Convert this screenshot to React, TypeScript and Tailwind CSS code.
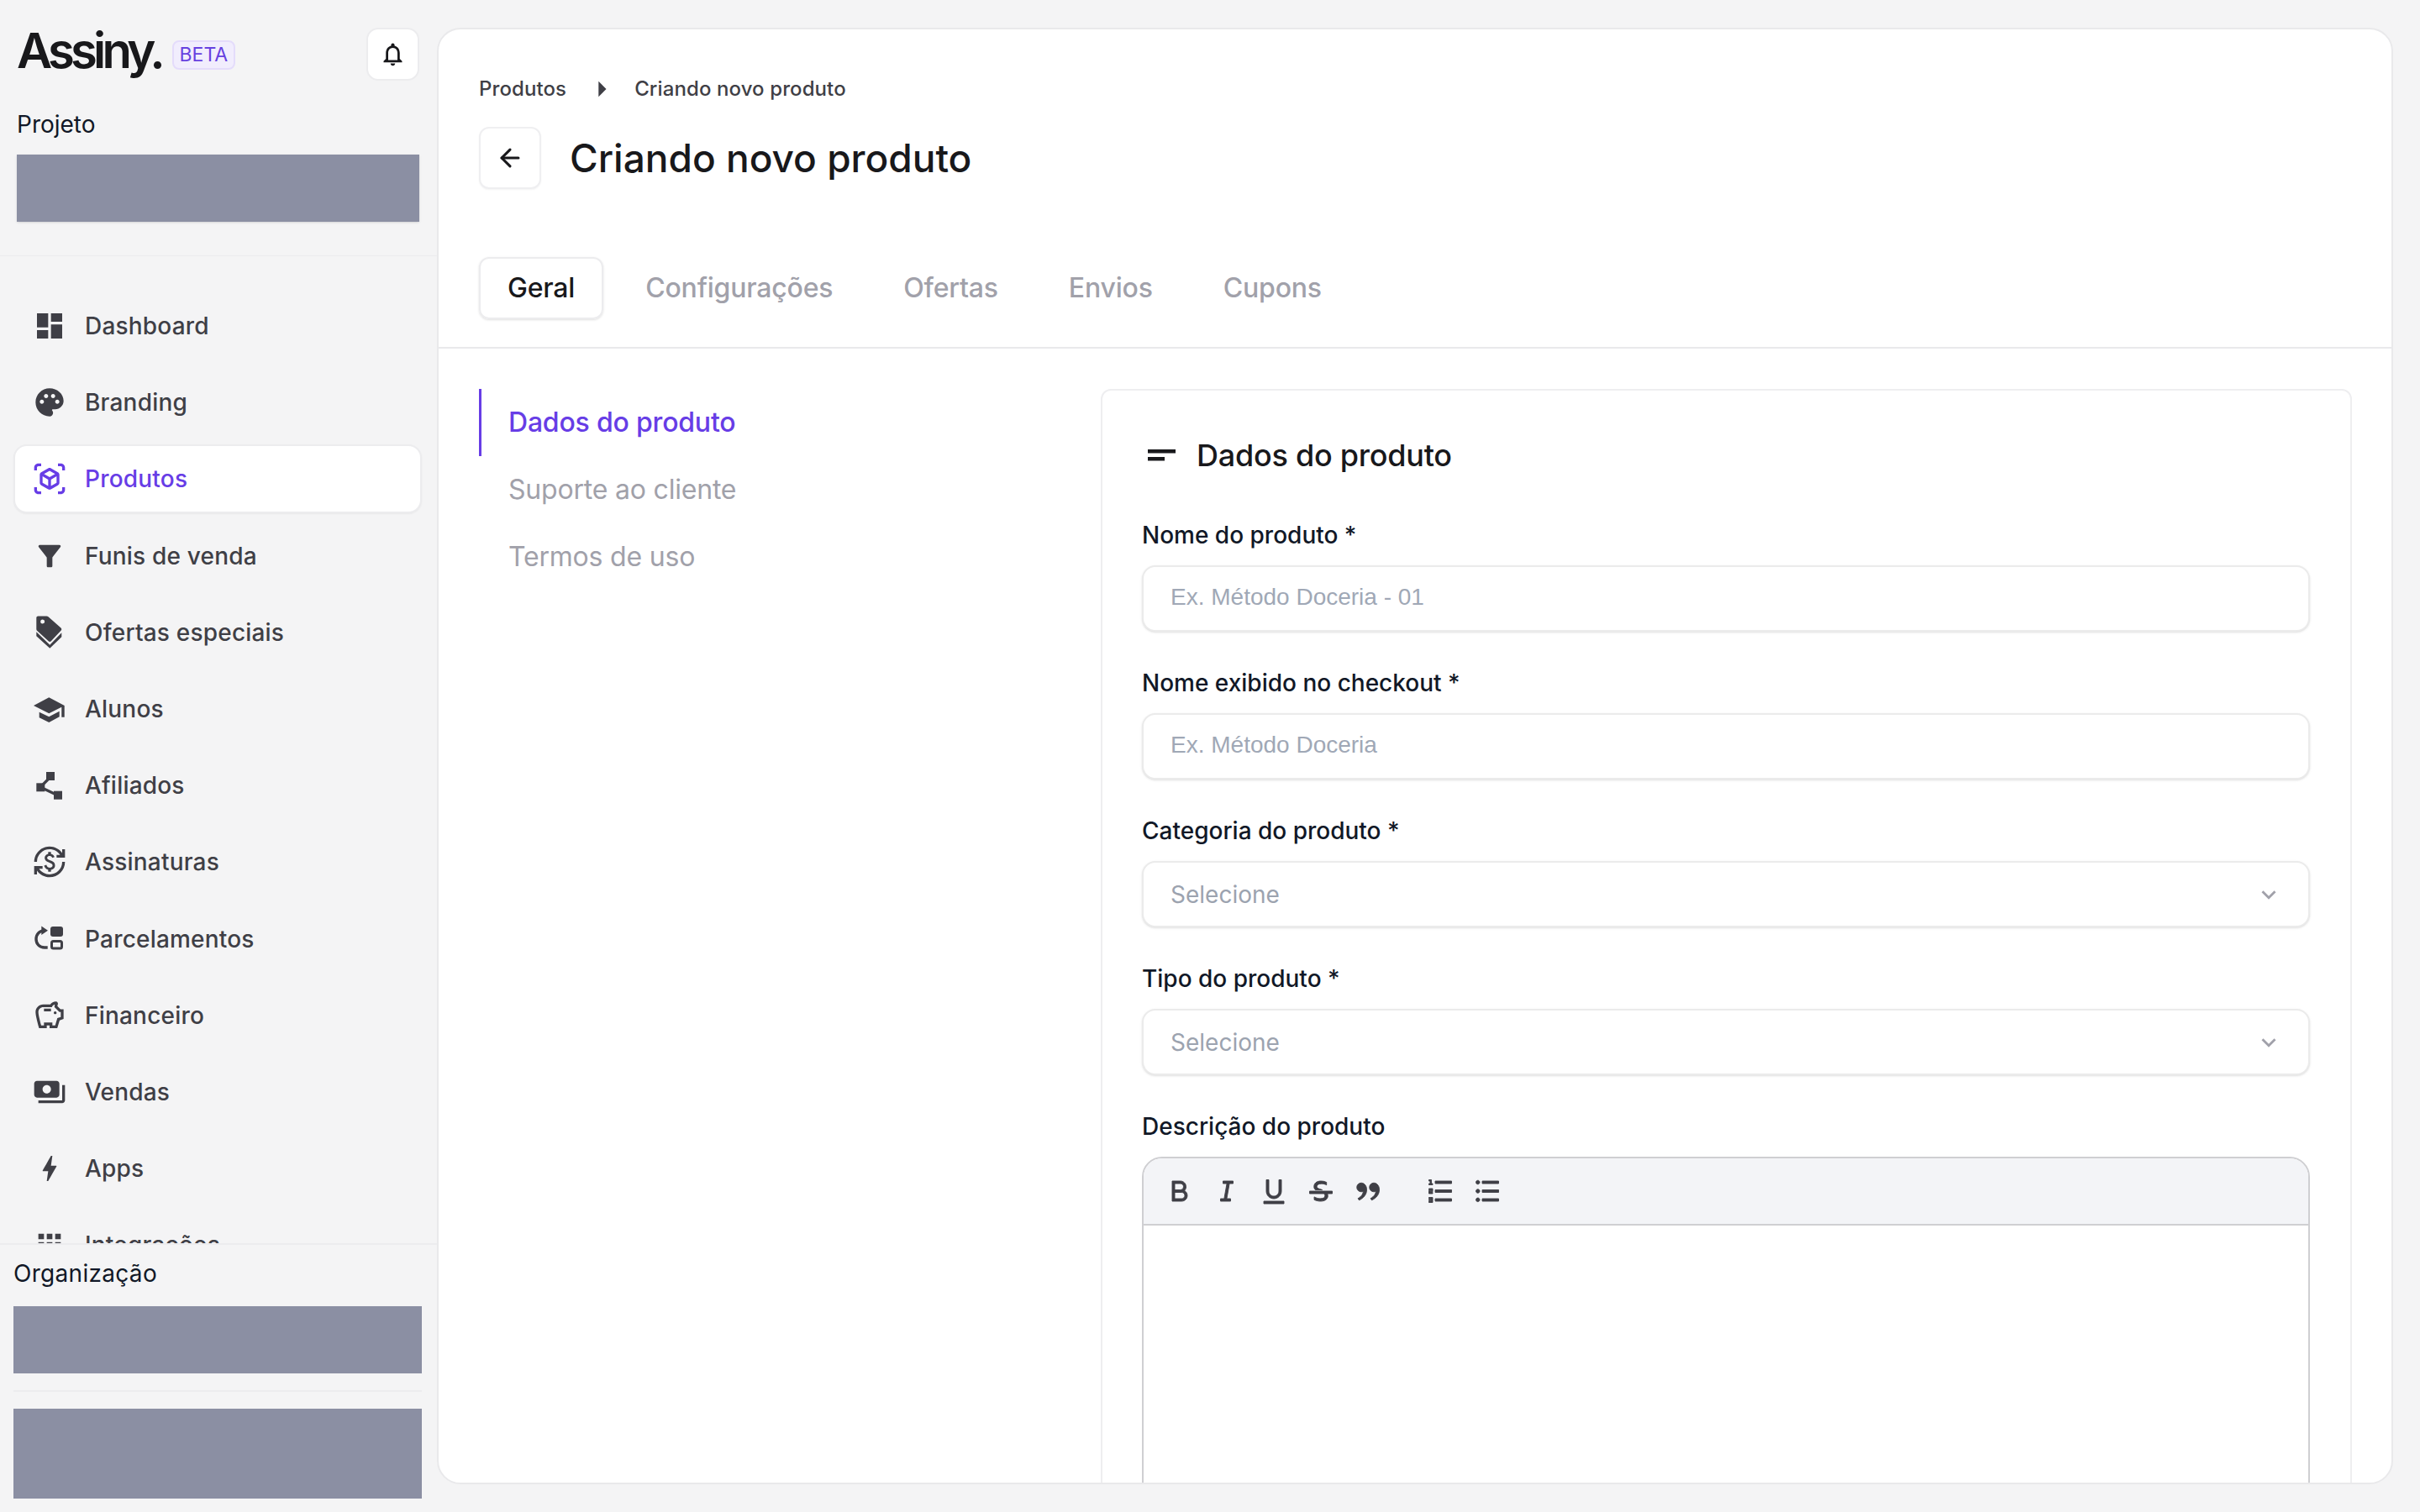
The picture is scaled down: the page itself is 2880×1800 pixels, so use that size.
import { ArrowLeft } from 'lucide-react';
import {
  MdApps,
  MdArrowRight,
  MdBolt,
  MdCurrencyExchange,
  MdDashboard,
  MdFilterAlt,
  MdKeyboardArrowDown,
  MdOutlineNotifications,
  MdOutlineSavings,
  MdOutlineViewInAr,
  MdPalette,
  MdPayments,
} from 'react-icons/md';
import {
  RiBold,
  RiDoubleQuotesR,
  RiItalic,
  RiListOrdered,
  RiListUnordered,
  RiStrikethrough,
  RiUnderline,
} from 'react-icons/ri';

type IconProps = { size?: number };

function TagsIcon({ size = 40 }: IconProps) {
  return (
    <svg width={size} height={size} viewBox="0 0 40 40" fill="currentColor">
      <path
        fillRule="evenodd"
        d="M6.300 .5H16.500c.8 0 1.400.3 2 .8L33.500 14.500c1 1 1 2.400 0 3.300L21.800 30.300c-.9.9-2.200.9-3.100 0L5.300 18c-.6-.6-1-1.300-1-2.100V2.500c0-1.100.9-2 2-2zM11.700 4.500a2.500 2.500 0 1 0 0 5 2.500 2.500 0 0 0 0-5z"
      />
      <path d="M4.300 19.300l16 15.400 14-14.400v5l-14 13.400-16-14.400z" />
    </svg>
  );
}

function CapIcon({ size = 40 }: IconProps) {
  return (
    <svg width={size} height={size} viewBox="0 0 40 40" fill="currentColor">
      <path d="M1 16L19.300 6.300 37.700 16v13.700h-3.400V17.800l-15 7.500z" />
      <path d="M7.700 23.700l11.600 5.600 12.400-6.600v6.600L19.300 36 7.700 30.300z" />
    </svg>
  );
}

function NodesIcon({ size = 40 }: IconProps) {
  return (
    <svg width={size} height={size} viewBox="0 0 40 40" fill="currentColor">
      <rect x="16" y="4" width="10" height="10" />
      <rect x="4.300" y="17.300" width="10" height="10" />
      <rect x="25" y="26.700" width="10" height="10" />
      <path d="M20 11L9 22l21 10" fill="none" stroke="currentColor" strokeWidth="3.200" />
    </svg>
  );
}

function InstallmentsIcon({ size = 40 }: IconProps) {
  return (
    <svg width={size} height={size} viewBox="0 0 40 40" fill="none" stroke="currentColor">
      <path d="M17.700 30H14C8 30 4 25.500 4 20S8 10 13 10h2" strokeWidth="3.400" />
      <path d="M10.300 4.500L18 9.700l-7.700 5.300z" fill="currentColor" stroke="none" />
      <rect x="21" y="5" width="15" height="12" rx="3" fill="currentColor" stroke="none" />
      <rect x="22.500" y="22.500" width="12" height="8.500" rx="2" strokeWidth="3" />
    </svg>
  );
}

function SectionIcon() {
  return (
    <svg width="34" height="14" viewBox="0 0 34 14" fill="currentColor">
      <rect x="0" y="0" width="33" height="4.500" />
      <rect x="0" y="9" width="20" height="4.500" />
    </svg>
  );
}

const navItems = [
  { label: 'Dashboard', icon: <MdDashboard size={40} /> },
  { label: 'Branding', icon: <MdPalette size={40} /> },
  { label: 'Produtos', icon: <MdOutlineViewInAr size={40} />, active: true },
  { label: 'Funis de venda', icon: <MdFilterAlt size={40} /> },
  { label: 'Ofertas especiais', icon: <TagsIcon /> },
  { label: 'Alunos', icon: <CapIcon /> },
  { label: 'Afiliados', icon: <NodesIcon /> },
  { label: 'Assinaturas', icon: <MdCurrencyExchange size={40} /> },
  { label: 'Parcelamentos', icon: <InstallmentsIcon /> },
  { label: 'Financeiro', icon: <MdOutlineSavings size={40} /> },
  { label: 'Vendas', icon: <MdPayments size={40} /> },
  { label: 'Apps', icon: <MdBolt size={40} /> },
  { label: 'Integrações', icon: <MdApps size={40} /> },
];

const tabs = ['Geral', 'Configurações', 'Ofertas', 'Envios', 'Cupons'];

const sections = ['Dados do produto', 'Suporte ao cliente', 'Termos de uso'];

function Field({ label, children }: { label: string; children: React.ReactNode }) {
  return (
    <div>
      <div className="mb-[19px] h-[34px] text-[28px] leading-[34px] font-medium text-[#111827]">{label}</div>
      {children}
    </div>
  );
}

function TextInput({ placeholder }: { placeholder: string }) {
  return (
    <input
      placeholder={placeholder}
      className="block h-[79px] w-full rounded-[16px] border-2 border-[#ebebeb] bg-white px-[32px] pb-[3px] [font-family:'Liberation_Sans',Arial,sans-serif] text-[28px] shadow-sm outline-none placeholder:text-[#a0a8b6]"
    />
  );
}

function SelectBox() {
  return (
    <div className="flex h-[79px] w-full items-center justify-between rounded-[16px] border-2 border-[#ebebeb] bg-white pr-[30px] pl-[32px] text-[28px] text-[#9ca3af] shadow-sm">
      <span>Selecione</span>
      <MdKeyboardArrowDown size={34} className="text-[#a1a1aa]" />
    </div>
  );
}

function ToolButton({ children }: { children: React.ReactNode }) {
  return <div className="flex h-[56px] w-[56px] items-center justify-center text-[#3f3f46]">{children}</div>;
}

export default function App() {
  return (
    <div className="flex h-screen w-full overflow-hidden bg-[#f4f4f5] [font-family:Inter,sans-serif]">
      {/* Sidebar */}
      <aside className="flex h-full w-[520px] shrink-0 flex-col">
        <div className="border-b border-[#ececee] pr-[21px] pb-[40px] pl-[20px]">
          <div className="flex h-[96px] items-end justify-between">
            <div className="flex items-center self-end pb-[2px]">
              <span className="text-[58px] leading-[68px] font-semibold tracking-[-4.800px] text-[#18181b]">Assiny.</span>
              <span className="mt-[11px] ml-[13px] flex h-[35px] w-[75px] items-center justify-center rounded-[8px] border-2 border-[#e4dcfb] bg-[#f1edfd] text-[23px] font-normal text-[#6741e0]">
                BETA
              </span>
            </div>
            <button className="flex h-[63px] w-[63px] items-center justify-center rounded-[14px] border-2 border-[#ececee] bg-white text-[#18181b]">
              <MdOutlineNotifications size={33} />
            </button>
          </div>
          <div className="mt-[35px] h-[34px] text-[28px] leading-[34px] text-[#111827]">Projeto</div>
          <div className="mt-[19px] h-[80px] bg-[#8b8fa3] shadow-sm" />
        </div>

        <nav className="flex min-h-0 flex-1 flex-col gap-[9.200px] overflow-hidden pt-[42px] pr-[18px] pl-[16px]">
          {navItems.map((item) => (
            <a
              key={item.label}
              className={`flex h-[82px] shrink-0 items-center gap-[22px] rounded-[16px] border-2 pl-[21px] text-[28px] font-medium tracking-[0.2px] ${
                item.active
                  ? 'border-[#ececee] bg-white text-[#673de6] shadow-xs'
                  : 'border-transparent text-[#3f3f46]'
              }`}
            >
              {item.icon}
              <span>{item.label}</span>
            </a>
          ))}
        </nav>

        <div className="relative h-[320px] shrink-0 border-t-2 border-[#ececee] bg-[#f4f4f5] pt-[17px] pr-[18px] pl-[16px]">
          <div className="h-[34px] text-[28px] leading-[34px] tracking-[0.3px] text-[#111827]">Organização</div>
          <div className="mt-[22px] h-[80px] bg-[#8b8fa3]" />
          <div className="mt-[20px] h-[2px] bg-[#ececee]" />
          <div className="mt-[20px] h-[107px] bg-[#8b8fa3]" />
        </div>
      </aside>

      {/* Main panel */}
      <main className="mt-[33px] mr-[32px] mb-[33px] min-w-0 flex-1 overflow-hidden rounded-[28px] border-2 border-[#e9e9eb] bg-white">
        <div className="border-b-2 border-[#e9e9eb] pr-[48px] pb-[33px] pl-[48px]">
          <div className="mt-[55px] flex h-[32px] items-center text-[24px] leading-[32px] font-medium tracking-[0.1px] text-[#3f3f46]">
            <span>Produtos</span>
            <MdArrowRight size={44} className="mr-[17px] ml-[20px] text-[#3f3f46]" />
            <span>Criando novo produto</span>
          </div>

          <div className="mt-[29px] flex items-center gap-[34px]">
            <button className="flex h-[74px] w-[74px] items-center justify-center rounded-[12px] border-2 border-[#efeff1] bg-white text-[#18181b] shadow-xs">
              <ArrowLeft size={34} strokeWidth={2.2} />
            </button>
            <h1 className="text-[46px] leading-[56px] font-medium text-[#18181b]">Criando novo produto</h1>
          </div>

          <div className="mt-[81px] flex items-center gap-[16px]">
            {tabs.map((tab, i) => (
              <div
                key={tab}
                className={`flex h-[74px] items-center rounded-[12px] border-2 px-[32px] text-[32px] font-medium tracking-[-0.2px] ${
                  i === 0 ? 'border-[#ececee] text-[#18181b] shadow-sm' : 'border-transparent text-[#a1a1aa]'
                }`}
              >
                {tab}
              </div>
            ))}
          </div>
        </div>

        <div className="flex pt-[48px] pr-[47px] pl-[48px]">
          <div className="w-[740px] shrink-0">
            {sections.map((s, i) => (
              <div
                key={s}
                className={`flex h-[80px] items-center border-l-[3px] pl-[32px] text-[32px] tracking-[-0.2px] ${
                  i === 0 ? 'border-[#673de6] font-medium text-[#673de6]' : 'border-transparent text-[#a1a1aa]'
                }`}
              >
                {s}
              </div>
            ))}
          </div>

          <div className="flex-1 rounded-[12px] border-2 border-[#eeeef0] pt-[55px] pr-[48px] pl-[47px]">
            <div className="flex h-[44px] items-center text-[#18181b]">
              <span className="ml-[7px] flex">
                <SectionIcon />
              </span>
              <h2 className="ml-[24px] text-[36px] leading-[44px] font-medium tracking-[-0.25px]">Dados do produto</h2>
            </div>

            <div className="mt-[56px] flex flex-col gap-[44px]">
              <Field label="Nome do produto *">
                <TextInput placeholder="Ex. Método Doceria - 01" />
              </Field>
              <Field label="Nome exibido no checkout *">
                <TextInput placeholder="Ex. Método Doceria" />
              </Field>
              <Field label="Categoria do produto *">
                <SelectBox />
              </Field>
              <Field label="Tipo do produto *">
                <SelectBox />
              </Field>
              <Field label="Descrição do produto">
                <div className="h-[600px] overflow-hidden rounded-t-[24px] border-2 border-[#cfcfd2]">
                  <div className="flex h-[80px] items-center border-b-2 border-[#cfcfd2] bg-[#f3f4f7] pl-[15px]">
                    <ToolButton><RiBold size={36} stroke="currentColor" strokeWidth={0.6} /></ToolButton>
                    <ToolButton><RiItalic size={36} stroke="currentColor" strokeWidth={0.6} /></ToolButton>
                    <ToolButton><RiUnderline size={36} stroke="currentColor" strokeWidth={0.6} /></ToolButton>
                    <ToolButton><RiStrikethrough size={36} stroke="currentColor" strokeWidth={0.6} /></ToolButton>
                    <ToolButton><RiDoubleQuotesR size={36} stroke="currentColor" strokeWidth={0.6} /></ToolButton>
                    <div className="w-[30px]" />
                    <ToolButton><RiListOrdered size={36} stroke="currentColor" strokeWidth={0.6} /></ToolButton>
                    <ToolButton><RiListUnordered size={36} stroke="currentColor" strokeWidth={0.6} /></ToolButton>
                  </div>
                </div>
              </Field>
            </div>
          </div>
        </div>
      </main>
    </div>
  );
}
